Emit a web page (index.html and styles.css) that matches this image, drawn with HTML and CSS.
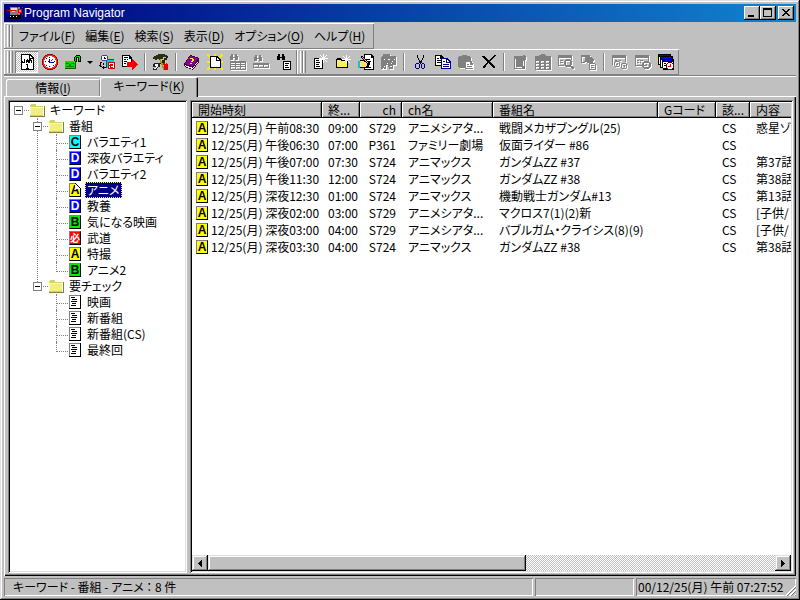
FILE: index.html
```html
<!DOCTYPE html>
<html lang="ja">
<head>
<meta charset="utf-8">
<title>Program Navigator</title>
<link rel="stylesheet" href="styles.css">
</head>
<body>
<svg class="defs" aria-hidden="true">
  <symbol id="i-folder" viewBox="0 0 16 14"><path d="M1 3V2l1-1h4l1 1v1h7v10H1z" fill="#d8d070"/><path d="M1 4h13v8H1z" fill="#f0f080"/><path d="M1 12V4h13" fill="none" stroke="#fff8b8"/><path d="M15 3v11M1 13.5h15" stroke="#808040" fill="none"/></symbol>
  <symbol id="i-page" viewBox="0 0 12 14"><path d="M0 0h12v14H0z" fill="#000"/><path d="M0 0h11v13H0z" fill="#808080"/><path d="M1 1h10v12H1z" fill="#fff"/><path d="M2 2h4v1H2zM3 4h5v1H3zM2 6h6v1H2zM3 8h4v1H3zM2 10h5v1H2z" fill="#000"/></symbol>
  <symbol id="i-calendar" viewBox="0 0 18 18"><path d="M3 1h9l4 4v12H3z" fill="#000"/><path d="M4 2h7v4h4v10H4zM12 3l2 2h-2z" fill="#fff"/><path d="M6 6h1v4H4V8h1v1h1zM8 7h1V6h1v1h1v3h-1V9H9v1H8zM12 6h1v1h1v3h-1V8h-1v2h-1V6zM8 11h2v4h1v1H8v-1h1v-3H8z" fill="#000"/></symbol>
  <symbol id="i-clock" viewBox="0 0 16 16"><path d="M5 0h6v1h2v1h1v1h1v2h1v6h-1v2h-1v1h-1v1h-2v1H5v-1H3v-1H2v-1H1v-2H0V5h1V3h1V2h1V1h2z" fill="#a00000"/><path d="M5 1h6v1h2v1h1v2h1v6h-1v2h-1v1h-2v1H5v-1H3v-1H2v-2H1V5h1V3h1V2h2z" fill="#f03020"/><path d="M6 2h4v1h2v1h1v2h1v4h-1v2h-1v1h-2v1H6v-1H4v-1H3v-2H2V6h1V4h1V3h2z" fill="#fff"/><path d="M7 3h1v1H7zM3 7h1v1H3zM12 7h1v1h-1zM7 12h1v1H7zM4 4h1v1H4zM11 11h1v1h-1zM4 11h1v1H4z" fill="#00c"/><path d="M7 5h1v3h4v1H7zM6 7h1v1H6z" fill="#00a"/><path d="M9 6h1v1H9zM10 5h1v1h-1z" fill="#f00"/></symbol>
  <symbol id="i-lock" viewBox="0 0 16 16"><path d="M9 8V3l2-2h3l2 2v5h-3V4h-1v4z" fill="#000"/><path d="M10 7V3l1-1h3l1 1v4h-1V3h-3v4z" fill="#00e000"/><path d="M0 7h11v8H0z" fill="#006000"/><path d="M0 7h10v7H0z" fill="#00e000"/><path d="M1 9h3v1H1zM6 9h3v1H6zM4 10h2v2H4zM1 12h8v1H1z" fill="#008000"/></symbol>
  <symbol id="i-device" viewBox="0 0 16 16"><path d="M7 5h8v9H7z" fill="#0cc"/><path d="M7 5h8v1H7zM7 5h1v9H7z" fill="#345"/><path d="M9 8h7v7H9z" fill="#e00000"/><path d="M10 9h5v5h-5z" fill="#fff"/><path d="M11 10h3v1h-1v1h-1v1h2v1h-3v-2h-1v-1h1zM13 11h1v1h-1z" fill="#e00000"/><path d="M3 1h5v1h1v4H8v1H3V6H2V2h1z" fill="#448"/><path d="M3 2h5v4H3z" fill="#fff"/><path d="M5 3h1v1h1v1H5zM1 8h2v1H2v3h1v1h1v-1h1v1h2v1H5v1H4v-1H3v-1H1v-1H0v-1h1zM4 9h1v2H4z" fill="#000"/></symbol>
  <symbol id="i-export" viewBox="0 0 16 16"><path d="M0 1h7l3 3v9H0z" fill="#000"/><path d="M1 2h6v3h2v7H1z" fill="#fff"/><path d="M2 3h4v1H2zM2 5h2v1H2zM5 5h1v1H5zM2 7h3v1H2zM2 9h2v1H2z" fill="#000"/><path d="M5 8h5V5h1v1h1v1h1v1h1v1h1v1h1v1h-1v1h-1v1h-1v1h-1v1h-1v1h-1v-3H5z" fill="#f00000"/></symbol>
  <symbol id="i-tools" viewBox="0 0 18 18"><path d="M2 3h2V2h2V1h7v1h2v1h1v2h-2V4h-3v2H9v1H7V6H5v1H3V6H1V4h1z" fill="#303010"/><path d="M14 3h2v2h-1v2h-1v2h-1v2H7v1H6v-2h2V9h2V7h2V5h2z" fill="#202020"/><path d="M8 6h1v2h1v2h1v3h1v3h1v1h-2v-2h-1v-3H9v-2H8z" fill="#a0a000"/><path d="M11 10h4v1h1v6h-4v-5h-1z" fill="#e00000"/><path d="M13 7h1v4h-1z" fill="#e8e800"/><path d="M2 10h5v1h1v3H6v1H5v2H1v-2h3v-1H1v-3h1z" fill="#222"/><path d="M3 11h3v3H5v1H4v1H2v-1h2v-2H3z" fill="#fff"/></symbol>
  <symbol id="i-book" viewBox="0 0 17 16"><path d="M1 10L7 1l9 3v4l-6 8-8-3z" fill="#400040"/><path d="M2 10L7 2l8 2-5 8z" fill="#900090"/><path d="M2 11l8 3 5-7v1l-5 7-7-2z" fill="#fff"/><path d="M7 4h3v1h1v2h-1v1H8V7h1V5H7zM7 9h2v1H7z" fill="#ff0"/></symbol>
  <symbol id="i-new" viewBox="0 0 16 16"><path d="M0 0h2v1h1v1h1v2H2V3H1V2H0zM14 0h2v2h-1v1h-1v1h-2V2h1V1h1zM7 0h2v2H7zM0 7h3v2H0zM13 7h3v2h-3zM7 14h2v2H7zM0 14h1v-1h1v-1h2v2H3v1H2v1H0zM12 12h2v1h1v1h1v2h-2v-1h-1v-1h-1z" fill="#f0f000"/><path d="M3 2h7l4 4v8H3z" fill="#000"/><path d="M4 3h5v4h4v6H4zM10 4l2 2h-2z" fill="#fff"/></symbol>
  <symbol id="i-find-table" viewBox="0 0 17 16"><path d="M2 0h2v3h2V0h2v2h1v4H6V4H4v2H1V2h1z" fill="#808080"/><path d="M1 7h16v9H1zM2 9v1h4V9zM7 9v1h4V9zM12 9v1h4V9zM2 11v1h4v-1zM7 11v1h4v-1zM12 11v1h4v-1zM2 13v2h4v-2zM7 13v2h4v-2zM12 13v2h4v-2z" fill="#808080" fill-rule="evenodd"/></symbol>
  <symbol id="i-find-field" viewBox="0 0 16 16"><path d="M2 1h2v3h2V1h2v2h1v4H6V5H4v2H1V3h1z" fill="#808080"/><path d="M0 9h16v5H0zM1 11v2h4v-2zM6 11v2h4v-2zM11 11v2h4v-2z" fill="#808080" fill-rule="evenodd"/></symbol>
  <symbol id="i-find-doc" viewBox="0 0 16 16"><path d="M2 0h2v3h2V0h2v2h1v4H6V4H4v2H1V2h1z" fill="#000"/><path d="M7 7h8v9H7z" fill="#000"/><path d="M8 8h6v7H8z" fill="#fff"/><path d="M9 9h4v1H9zM9 11h3v1H9zM9 13h4v1H9z" fill="#000"/></symbol>
  <symbol id="i-doc-star" viewBox="0 0 16 16"><path d="M2 4h9v11H2z" fill="#000"/><path d="M3 5h7v9H3z" fill="#fff"/><path d="M4 6h3v1H4zM4 8h4v1H4zM4 10h3v1H4zM4 12h4v1H4z" fill="#000"/><path d="M11 0h1v3h-1zM8 1h1v1h1v1H9V2H8zM14 1h1v1h-1v1h-1V2h1zM7 4h3v1H7zM13 4h3v1h-3zM10 3h3v3h-3zM9 6h1v1H9v1H8V7h1zM13 6h1v1h1v1h-1V7h-1zM11 6h1v3h-1z" fill="#fff"/></symbol>
  <symbol id="i-folder-star" viewBox="0 0 16 16"><path d="M1 5h1V4h4v1h1v1h6v8H1z" fill="#000"/><path d="M2 6h4v1h6v6H2z" fill="#f8f060"/><path d="M11 1h1v3h-1zM8 2h1v1h1v1H9V3H8zM14 2h1v1h-1v1h-1V3h1zM7 5h3v1H7zM13 5h3v1h-3zM10 4h3v3h-3zM9 7h1v1H9v1H8V8h1zM13 7h1v1h1v1h-1V8h-1zM11 7h1v3h-1z" fill="#fff"/></symbol>
  <symbol id="i-edit" viewBox="0 0 16 16"><path d="M6 0h8l2 3v13H6z" fill="#000"/><path d="M7 1h6v3h2v11H7z" fill="#fff"/><path d="M8 5h4v1H8zM10 7h3v1h-3zM9 13h4v1H9z" fill="#000"/><path d="M0 7h2v7H0z" fill="#0cc"/><path d="M2 6h5v1h3v1h2v2h-1v3H9v1H2z" fill="#000"/><path d="M2 7h4v1h4v2H9v2H8v1H2z" fill="#ffe070"/><path d="M3 2h2v1h1v1h1v1h1v1h1v1h1v1h1v1h1v2h-2v-1H9V9H8V8H7V7H6V6H5V5H4V4H3z" fill="#000"/><path d="M4 3h1v1h1v1h1v1h1v1h1v1h1v1H9V8H8V7H7V6H6V5H5V4H4z" fill="#fc0"/></symbol>
  <symbol id="i-props" viewBox="0 0 16 16"><path d="M1 2h1V0h7v2h6v9h-3v4H8v-2H7v-2H5v4H0V3h1z" fill="#808080"/><path d="M3 12h1v1H3zM2 14h1v1H2zM7 5h2v1H7zM11 7h1v1h-1zM9 12h2v1H9zM13 5h1v1h-1zM3 5h1v1H3zM6 9h1v1H6zM10 9h1v1h-1z" fill="#fff"/></symbol>
  <symbol id="i-cut" viewBox="0 0 16 16"><path d="M5 1h1v3h1v2h1v1h1V6h1V4h1V1h1v3h-1v2h-1v2H9v2H8V8H7V6H6V4H5z" fill="#000"/><path d="M4 9h3v1h1v4H7v1H4v-1H3v-4h1zM4 10v4h3v-4zM10 9h2v1h1v4h-1v1h-2v-1H9v-4h1zM10 10v4h2v-4zM7 8h3v1H7z" fill="#000080" fill-rule="evenodd"/></symbol>
  <symbol id="i-copy" viewBox="0 0 16 16"><path d="M0 1h6l3 3v8H0z" fill="#000"/><path d="M1 2h4v3h3v6H1z" fill="#fff"/><path d="M2 4h2v1H2zM2 6h4v1H2zM2 8h4v1H2z" fill="#000"/><path d="M6 4h6l4 4v7H6z" fill="#000080"/><path d="M7 5h4v4h4v5H7zM12 6l2 2h-2z" fill="#fff"/><path d="M8 7h2v1H8zM8 10h6v1H8zM8 12h6v1H8z" fill="#000080"/></symbol>
  <symbol id="i-paste" viewBox="0 0 16 16"><path d="M0 3h1V2h3V1h5v1h3v1h1v4h1v2h1v6H7v-1H1v-1H0z" fill="#808080"/><path d="M8 8h4v3h3v3H8z" fill="#fff"/><path d="M9 10h2v1H9zM9 12h5v1H9z" fill="#808080"/></symbol>
  <symbol id="i-delete" viewBox="0 0 16 16"><path d="M1 2h3v1h1v1h1v1h1v1h2V5h1V4h1V3h1V2h1V1h2v1h-1v1h-1v1h-1v1h-1v1h-1v1H9v1h1v1h1v1h1v1h1v1h1v2h-2v-1h-1v-1h-1v-1H9v-1H8V9H7v1H6v1H5v2H4v1H2v-2h1v-1h1v-1h1V9h1V7H5V6H4V5H3V4H2V3H1z" fill="#000"/></symbol>
  <symbol id="i-g-doc" viewBox="0 0 16 16"><path d="M2 2h9V1h2v1h1v4h-1v9H2zM3 3v11h9V7h-1v6H4V5h1V4H3z" fill="#808080" fill-rule="evenodd"/><path d="M3 3h2v1h2v2h2V4h2V3h3v2h-2v1h-1v2h-1v2h1v2h2v2h-3v-1H9v-1H8v-1H7v1H6v1H4v-2h1v-1h1V9H5V7H4V5H3z" fill="#808080"/></symbol>
  <symbol id="i-g-table" viewBox="0 0 16 16"><path d="M0 2h4V1h2V0h4v1h1v1h5v14H0zM1 7v2h3V7zM6 7v2h3V7zM11 7v2h3V7zM1 10v2h3v-2zM6 10v2h3v-2zM11 10v2h3v-2zM1 13v2h3v-2zM6 13v2h3v-2zM11 13v2h3v-2z" fill="#808080" fill-rule="evenodd"/></symbol>
  <symbol id="i-g-search" viewBox="0 0 16 16"><path d="M0 1h14v5h-1V4H1v7h5v1H0zM2 6h3v1H2zM2 8h3v1H2zM8 5h4v1h1v1h1v4h-1v1h2v1h1v2h-2v-1h-1v-1H8v-1H7v-1H6V7h1V6h1zM8 7v4h4V7z" fill="#808080" fill-rule="evenodd"/></symbol>
  <symbol id="i-g-move" viewBox="0 0 16 16"><path d="M0 1h9v2h2v1h1v1h1v2h-1v2h-2v1H8V9H6V8H4v1H0zM1 3v5h2V7h1V3z" fill="#808080" fill-rule="evenodd"/><path d="M8 9h6v1h1v6H8zM9 10v5h5v-5zM10 11h3v1h-3zM10 13h3v1h-3z" fill="#808080" fill-rule="evenodd"/></symbol>
  <symbol id="i-g-group" viewBox="0 0 16 16"><path d="M0 1h14v7h-1V4H1v7H0zM3 6h2v1H3zM7 6h2v1H7z" fill="#808080" fill-rule="evenodd"/><path d="M3 7h4v1h1v4H7v1H3v-1H2V8h1zM3 8v4h4V8zM5 9h1v2H4v-1h1zM10 9h4v1h1v4h-1v1h-4v-1H9v-4h1zM10 10v4h4v-4zM11 11h2v2h-1v-1h-1z" fill="#808080" fill-rule="evenodd"/></symbol>
  <symbol id="i-g-clock" viewBox="0 0 16 16"><path d="M0 1h14v6h-1V4H1v7h6v1H0zM2 6h2v1H2zM5 6h3v1H5zM2 8h2v1H2zM5 8h1v1H5z" fill="#808080"/><path d="M9 7h5v1h1v1h1v4h-1v1h-1v1H9v-1H8v-1H7V9h1V8h1zM9 9v4h5V9zM11 10h1v2H9v-1h2z" fill="#808080" fill-rule="evenodd"/></symbol>
  <symbol id="i-windows" viewBox="0 0 16 16"><path d="M0 0h13v2h2v3h1v11H5v-2H2v-3H0z" fill="#000"/><path d="M1 1h11v1H1zM3 3h11v2H3zM5 6h10v1H5z" fill="#0000e0"/><path d="M1 3h1v7H1zM3 6h1v7H3zM5 8h10v6H5z" fill="#fff"/><path d="M6 9h2v1H6zM6 11h2v1H6z" fill="#000"/><path d="M10 8h4v1h1v1h1v4h-1v1h-1v1h-4v-1H9v-1H8v-4h1V9h1z" fill="#600"/><path d="M10 9h4v1h1v4h-1v1h-4v-1H9v-4h1z" fill="#fff"/><path d="M12 10h1v3h-3v-1h2z" fill="#f00"/></symbol>
</svg>
<div class="window">
  <header class="titlebar">
    <svg class="app-icon" viewBox="0 0 16 14" aria-hidden="true"><path d="M3 1h10v8H3z" fill="#808080"/><path d="M4 2h6v2H4zM5 5h3v1H5z" fill="#e0e0e0"/><path d="M2 9h12v4H2z" fill="#000"/><path d="M3 10h1v1H3zM6 10h1v1H6zM9 10h1v1H9z" fill="#fff"/><path d="M0 4h9v1H0zM11 3h4v4h-4zM10 1h1v1h-1zM15 1h1v1h-1zM10 8h1v1h-1zM15 8h1v1h-1z" fill="#f00000"/><path d="M12 4h2v2h-2z" fill="#f88"/></svg>
    <h1>Program Navigator</h1>
    <div class="caption-buttons">
      <button aria-label="最小化"><svg viewBox="0 0 12 10"><path d="M2 7h6v2H2z"/></svg></button>
      <button aria-label="最大化"><svg viewBox="0 0 12 10"><path d="M1 0h9v9H1zM2 2v6h7V2z" fill-rule="evenodd"/></svg></button>
      <button class="close" aria-label="閉じる"><svg viewBox="0 0 12 10"><path d="M2 1h2v1h1v1h2V2h1V1h2v1H9v1H8v1H7v1h1v1h1v1h1v1H8V7H7V6H5v1H4v1H2V7h1V6h1V5h1V4H4V3H3V2H2z"/></svg></button>
    </div>
  </header>
  <div class="rebar">
    <nav class="band menu">
      <span class="grip"></span>
      <button>ファイル(<u>F</u>)</button><button>編集(<u>E</u>)</button><button>検索(<u>S</u>)</button><button>表示(<u>D</u>)</button><button>オプション(<u>O</u>)</button><button>ヘルプ(<u>H</u>)</button>
    </nav>
  </div>
  <div class="rebar tools-row">
    <div class="band tools">
      <span class="grip"></span>
      <button class="pressed" aria-label="番組表"><svg class="large"><use href="#i-calendar"/></svg></button>
      <button aria-label="予約"><svg><use href="#i-clock"/></svg></button>
      <button aria-label="ロック"><svg><use href="#i-lock"/></svg></button>
      <button class="drop" aria-label="ロックの種類"></button>
      <button aria-label="録画機器"><svg><use href="#i-device"/></svg></button>
      <button aria-label="書き出し"><svg><use href="#i-export"/></svg></button>
      <span class="sep"></span>
      <button aria-label="設定"><svg class="large"><use href="#i-tools"/></svg></button>
      <span class="sep"></span>
      <button aria-label="ヘルプ"><svg class="wide"><use href="#i-book"/></svg></button>
      <button aria-label="新着"><svg><use href="#i-new"/></svg></button>
      <button disabled aria-label="表を検索"><svg class="wide"><use href="#i-find-table"/></svg></button>
      <button disabled aria-label="項目を検索"><svg><use href="#i-find-field"/></svg></button>
      <button aria-label="検索"><svg><use href="#i-find-doc"/></svg></button>
    </div>
    <div class="band tools">
      <span class="grip"></span>
      <button aria-label="新規キーワード"><svg><use href="#i-doc-star"/></svg></button>
      <button aria-label="新規フォルダ"><svg><use href="#i-folder-star"/></svg></button>
      <button aria-label="編集"><svg><use href="#i-edit"/></svg></button>
      <button disabled aria-label="プロパティ"><svg><use href="#i-props"/></svg></button>
      <span class="sep"></span>
      <button aria-label="切り取り"><svg><use href="#i-cut"/></svg></button>
      <button aria-label="コピー"><svg><use href="#i-copy"/></svg></button>
      <button disabled aria-label="貼り付け"><svg><use href="#i-paste"/></svg></button>
      <button aria-label="削除"><svg><use href="#i-delete"/></svg></button>
      <span class="sep"></span>
      <button disabled aria-label="番組を削除"><svg><use href="#i-g-doc"/></svg></button>
      <button disabled aria-label="表を編集"><svg><use href="#i-g-table"/></svg></button>
      <button disabled aria-label="表を表示"><svg><use href="#i-g-search"/></svg></button>
      <button disabled aria-label="移動"><svg><use href="#i-g-move"/></svg></button>
      <span class="sep"></span>
      <button disabled aria-label="Gコード予約"><svg><use href="#i-g-group"/></svg></button>
      <button disabled aria-label="予約一覧"><svg><use href="#i-g-clock"/></svg></button>
      <button aria-label="すべての予約"><svg><use href="#i-windows"/></svg></button>
    </div>
  </div>
  <div class="tabs" role="tablist">
    <button class="tab" role="tab" aria-selected="false">情報(<u>I</u>)</button>
    <button class="tab active" role="tab" aria-selected="true">キーワード(<u>K</u>)</button>
  </div>
  <main class="page">
    <div class="tree sunken">
      <div class="node"><span class="box"></span><svg class="folder"><use href="#i-folder"/></svg><span class="label">キーワード</span></div>
      <ul class="groups">
        <li>
          <div class="node"><span class="box"></span><svg class="folder"><use href="#i-folder"/></svg><span class="label">番組</span></div>
          <ul class="leaves">
            <li><b class="badge cyan">C</b><span class="label">バラエティ1</span></li>
            <li><b class="badge blue">D</b><span class="label">深夜バラエティ</span></li>
            <li><b class="badge blue">D</b><span class="label">バラエティ2</span></li>
            <li><b class="badge folded">A</b><span class="label selected">アニメ</span></li>
            <li><b class="badge blue">D</b><span class="label">教養</span></li>
            <li><b class="badge green">B</b><span class="label">気になる映画</span></li>
            <li><b class="badge red">必</b><span class="label">武道</span></li>
            <li><b class="badge">A</b><span class="label">特撮</span></li>
            <li><b class="badge green">B</b><span class="label">アニメ2</span></li>
          </ul>
        </li>
        <li>
          <div class="node"><span class="box"></span><svg class="folder"><use href="#i-folder"/></svg><span class="label">要チェック</span></div>
          <ul class="leaves">
            <li><svg class="sheet"><use href="#i-page"/></svg><span class="label">映画</span></li>
            <li><svg class="sheet"><use href="#i-page"/></svg><span class="label">新番組</span></li>
            <li><svg class="sheet"><use href="#i-page"/></svg><span class="label">新番組(CS)</span></li>
            <li><svg class="sheet"><use href="#i-page"/></svg><span class="label">最終回</span></li>
          </ul>
        </li>
      </ul>
    </div>
    <div class="list sunken">
      <div class="list-view">
        <table>
          <colgroup><col class="c-start"><col class="c-end"><col class="c-ch"><col class="c-name"><col class="c-title"><col class="c-gcode"><col class="c-kind"><col></colgroup>
          <thead><tr><th>開始時刻</th><th>終...</th><th class="num">ch</th><th>ch名</th><th>番組名</th><th>Gコード</th><th>該...</th><th>内容</th></tr></thead>
          <tbody>
            <tr><td><b class="badge">A</b>12/25(月) 午前08:30</td><td>09:00</td><td class="num">S729</td><td>アニメシアタ...</td><td>戦闘メカザブングル(25)</td><td></td><td>CS</td><td>惑星ゾ</td></tr>
            <tr><td><b class="badge">A</b>12/25(月) 午後06:30</td><td>07:00</td><td class="num">P361</td><td>ファミリー劇場</td><td>仮面ライダー #86</td><td></td><td>CS</td><td></td></tr>
            <tr><td><b class="badge">A</b>12/25(月) 午後07:00</td><td>07:30</td><td class="num">S724</td><td>アニマックス</td><td>ガンダムZZ #37</td><td></td><td>CS</td><td>第37話</td></tr>
            <tr><td><b class="badge">A</b>12/25(月) 午後11:30</td><td>12:00</td><td class="num">S724</td><td>アニマックス</td><td>ガンダムZZ #38</td><td></td><td>CS</td><td>第38話</td></tr>
            <tr><td><b class="badge">A</b>12/25(月) 深夜12:30</td><td>01:00</td><td class="num">S724</td><td>アニマックス</td><td>機動戦士ガンダム#13</td><td></td><td>CS</td><td>第13話</td></tr>
            <tr><td><b class="badge">A</b>12/25(月) 深夜02:00</td><td>03:00</td><td class="num">S729</td><td>アニメシアタ...</td><td>マクロス7(1)(2)新</td><td></td><td>CS</td><td>[子供/</td></tr>
            <tr><td><b class="badge">A</b>12/25(月) 深夜03:00</td><td>04:00</td><td class="num">S729</td><td>アニメシアタ...</td><td>バブルガム・クライシス(8)(9)</td><td></td><td>CS</td><td>[子供/</td></tr>
            <tr><td><b class="badge">A</b>12/25(月) 深夜03:30</td><td>04:00</td><td class="num">S724</td><td>アニマックス</td><td>ガンダムZZ #38</td><td></td><td>CS</td><td>第38話</td></tr>
          </tbody>
        </table>
      </div>
      <div class="scrollbar">
        <button aria-label="左へ"><svg viewBox="0 0 4 7"><path d="M4 0v7L0 3.500z"/></svg></button>
        <div class="track"><div class="thumb"></div></div>
        <button aria-label="右へ"><svg viewBox="0 0 4 7"><path d="M0 0v7l4-3.500z"/></svg></button>
      </div>
    </div>
  </main>
  <footer class="status">
    <span class="cell message">キーワード - 番組 - アニメ ： 8 件</span>
    <span class="cell spare"></span>
    <span class="cell clock">00/12/25(月) 午前 07:27:52<i class="sizer"></i></span>
  </footer>
</div>
</body>
</html>
```

FILE: styles.css
```css
* { box-sizing: border-box; }

body {
  margin: 0;
  color: #000;
  font: 12px/16px "Noto Sans CJK JP", "Liberation Sans", sans-serif;
  font-feature-settings: "palt";
  white-space: nowrap;
}

button {
  margin: 0;
  padding: 0;
  border: 0;
  background: none;
  color: inherit;
  font: inherit;
  font-feature-settings: inherit;
}

ul { margin: 0; padding: 0; list-style: none; }
u { text-underline-offset: 2px; }
svg { display: block; shape-rendering: crispEdges; }
.defs { display: none; }

.window {
  display: flex;
  flex-direction: column;
  min-height: 100vh;
  padding: 4px;
  background: #c0c0c0;
  box-shadow: inset -1px -1px #000, inset 1px 1px #dfdfdf, inset -2px -2px #808080, inset 2px 2px #fff;
}

/* Title bar */
.titlebar {
  display: flex;
  align-items: center;
  height: 18px;
  padding: 0 2px 0 3px;
  background: linear-gradient(90deg, #000080, #1084d0);
  color: #fff;
}
.titlebar h1 { flex: 1; margin: 0 0 0 1px; font: 12px/16px "Liberation Sans", sans-serif; }
.app-icon { width: 16px; height: 14px; }
.caption-buttons { display: flex; }
.caption-buttons button {
  width: 16px;
  height: 14px;
  padding: 2px;
  background: #c0c0c0;
  box-shadow: inset -1px -1px #000, inset 1px 1px #fff, inset -2px -2px #808080;
}
.caption-buttons .close { margin-left: 2px; }
.caption-buttons svg { width: 12px; height: 10px; }

/* Menu and tool bands */
.rebar { display: flex; height: 26px; margin-top: 1px; }
.tools-row { height: 28px; margin-top: 0; border-bottom: 1px solid #fff; box-shadow: inset 0 -1px #808080; }
.band {
  display: flex;
  align-items: center;
  height: 26px;
  padding-right: 2px;
  box-shadow: inset 0 1px #fff, inset -1px -1px #808080, inset 1px 0 #fff;
}
.grip {
  width: 6px;
  height: 22px;
  margin: 0 2px 0 3px;
  background: linear-gradient(90deg, #fff 1px, #c0c0c0 1px 2px, #808080 2px 3px, #fff 3px 4px, #c0c0c0 4px 5px, #808080 5px);
}
.menu { padding-right: 4px; }
.menu .grip { margin-right: 1px; }
.menu button { padding: 0 5px; }
.tools button { display: grid; place-items: center; width: 23px; height: 22px; }
.tools svg { width: 16px; height: 16px; }
.tools svg.wide { width: 17px; }
.tools svg.large { width: 18px; height: 18px; }
.tools button:disabled svg { filter: drop-shadow(1px 1px 0 #fff); }
.tools .pressed {
  background: conic-gradient(#fff 25%, #c0c0c0 0 50%, #fff 0 75%, #c0c0c0 0) 0 0 / 2px 2px;
  box-shadow: inset 1px 1px #808080, inset -1px -1px #fff;
}
.tools .drop { width: 11px; }
.drop::before { content: ""; border: 3px solid transparent; border-top-color: #000; border-bottom: 0; }
.sep { width: 2px; height: 18px; margin: 0 3px; border-left: 1px solid #808080; border-right: 1px solid #fff; }

/* Tabs */
.tabs { display: flex; align-items: flex-end; height: 19px; padding: 0 2px; }
.tab {
  width: 94px;
  height: 17px;
  border-radius: 2px 2px 0 0;
  box-shadow: inset 1px 1px #fff, inset -1px 0 #808080;
}
.tab.active {
  position: relative;
  width: 98px;
  height: 20px;
  margin-bottom: -1px;
  padding-bottom: 2px;
  background: #c0c0c0;
  box-shadow: inset 1px 1px #fff, inset -1px 0 #000, inset -2px 0 #808080;
}

.page {
  flex: 1;
  display: flex;
  gap: 3px;
  padding: 4px 3px 3px 4px;
  box-shadow: inset 1px 1px #fff, inset -1px -1px #000, inset -2px -2px #808080;
}
.sunken {
  padding: 2px;
  background: #fff;
  box-shadow: inset 1px 1px #808080, inset -1px -1px #fff, inset 2px 2px #000, inset -2px -2px #dfdfdf;
}

/* Keyword tree */
.tree { flex: none; width: 179px; }
.node, .leaves li { display: flex; align-items: center; height: 16px; }
.box {
  position: relative;
  width: 9px;
  height: 9px;
  margin: 0 6px 0 4px;
  border: 1px solid #808080;
  background: linear-gradient(#000, #000) center / 5px 1px no-repeat #fff;
}
.box::after { content: ""; position: absolute; left: 9px; top: 3px; width: 5px; border-top: 1px dotted #808080; }
.folder { width: 16px; height: 14px; }
.label { margin-left: 3px; padding: 0 2px; }
.groups { padding-left: 19px; }
.groups > li { position: relative; }
.groups > li:first-child::before {
  content: "";
  position: absolute;
  left: 8px;
  top: 0;
  bottom: -4px;
  border-left: 1px dotted #808080;
}
.groups .box { z-index: 1; }
.leaves { padding-left: 27px; }
.leaves li { position: relative; padding-left: 13px; }
.leaves li::before {
  content: "";
  position: absolute;
  left: 0;
  top: 0;
  width: 11px;
  height: 9px;
  border: dotted #808080;
  border-width: 0 0 1px 1px;
}
.leaves li:not(:last-child)::after {
  content: "";
  position: absolute;
  left: 0;
  top: 9px;
  height: 7px;
  border-left: 1px dotted #808080;
}
.leaves .label { margin-left: 4px; }
.selected { background: #000080; color: #fff; outline: 1px dotted #ff0; outline-offset: -1px; }
.sheet { width: 12px; height: 14px; }
.badge {
  position: relative;
  display: inline-block;
  width: 12px;
  height: 14px;
  border: 1px solid #000;
  border-top-color: #808080;
  border-left-color: #808080;
  background: #ff0;
  color: #000;
  font: bold 12px/12px "Liberation Sans", sans-serif;
  text-align: center;
}
.cyan { background: #0ff; }
.blue { background: #00f; color: #fff; }
.green { background: #0e0; }
.red { background: #f00; color: #fff; font: bold 10px/12px "Noto Sans CJK JP", sans-serif; }
.folded::after {
  content: "";
  position: absolute;
  right: -1px;
  top: -1px;
  width: 6px;
  height: 6px;
  background: linear-gradient(45deg, #fff 45%, #000 45% 55%, #fff 55%);
}

/* Programme list */
.list { flex: 1; min-width: 0; display: flex; flex-direction: column; }
.list-view { flex: 1; overflow: hidden; }
table { width: 1060px; border-collapse: separate; border-spacing: 0; table-layout: fixed; }
th, td { padding: 0 6px; overflow: hidden; text-align: left; font-weight: 400; }
th {
  height: 16px;
  background: #c0c0c0;
  line-height: 16px;
  box-shadow: inset -1px -1px #000, inset 1px 1px #fff, inset -2px -2px #808080;
}
td { height: 17px; line-height: 17px; }
td:first-child { padding: 0 0 0 4px; }
tbody::before { content: ""; display: block; height: 1px; }
td .badge { margin: 2px 3px 0 0; vertical-align: top; }
.num { text-align: right; }
.c-start { width: 130px; }
.c-end { width: 38px; }
.c-ch { width: 42px; }
.c-name { width: 91px; }
.c-title { width: 165px; }
.c-gcode { width: 58px; }
.c-kind { width: 34px; }

.scrollbar { display: flex; height: 16px; }
.scrollbar button, .thumb {
  background: #c0c0c0;
  box-shadow: inset -1px -1px #000, inset 1px 1px #dfdfdf, inset -2px -2px #808080, inset 2px 2px #fff;
}
.scrollbar button { display: grid; place-items: center; width: 16px; }
.scrollbar svg { width: 4px; height: 7px; }
.track { flex: 1; background: conic-gradient(#fff 25%, #c0c0c0 0 50%, #fff 0 75%, #c0c0c0 0) 0 0 / 2px 2px; }
.thumb { width: 56%; height: 16px; }

/* Status bar */
.status { display: flex; gap: 2px; padding-top: 2px; }
.cell { height: 18px; padding: 0 2px; line-height: 17px; box-shadow: inset 1px 1px #808080, inset -1px -1px #fff; }
.message { flex: 1; padding-left: 9px; }
.spare { width: 99px; }
.clock { position: relative; width: 160px; }
.sizer {
  position: absolute;
  right: 0;
  bottom: 0;
  width: 12px;
  height: 12px;
  background: repeating-linear-gradient(135deg, #fff 0 1px, #808080 1px 2px, #c0c0c0 2px 3px);
  clip-path: polygon(100% 0, 100% 100%, 0 100%);
}
```
